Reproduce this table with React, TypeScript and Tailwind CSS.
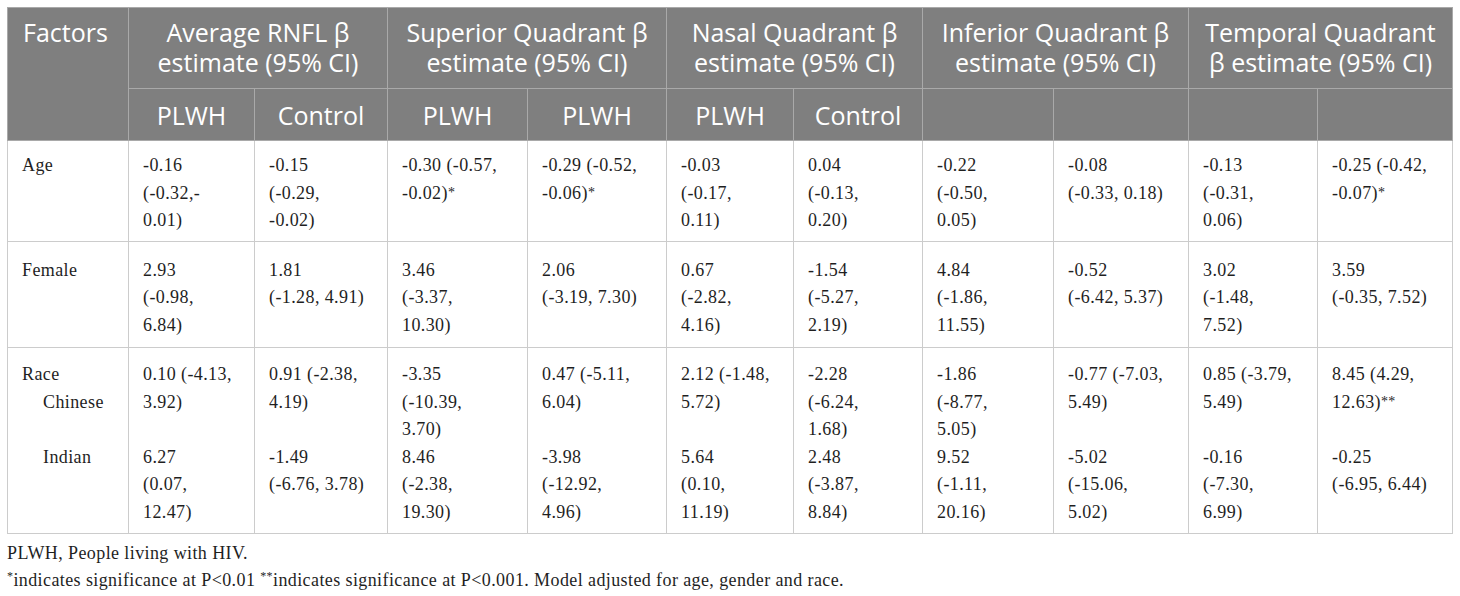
import React from "react";

const widths = [
  "w-[121px]",
  "w-[126px]",
  "w-[133px]",
  "w-[140px]",
  "w-[139px]",
  "w-[127px]",
  "w-[129px]",
  "w-[131px]",
  "w-[135px]",
  "w-[129px]",
  "w-[135px]",
];

type Cell = string[];

const ageRow: Cell[] = [
  ["-0.16", "(-0.32,-", "0.01)"],
  ["-0.15", "(-0.29,", "-0.02)"],
  ["-0.30 (-0.57,", "-0.02)*"],
  ["-0.29 (-0.52,", "-0.06)*"],
  ["-0.03", "(-0.17,", "0.11)"],
  ["0.04", "(-0.13,", "0.20)"],
  ["-0.22", "(-0.50,", "0.05)"],
  ["-0.08", "(-0.33, 0.18)"],
  ["-0.13", "(-0.31,", "0.06)"],
  ["-0.25 (-0.42,", "-0.07)*"],
];

const femaleRow: Cell[] = [
  ["2.93", "(-0.98,", "6.84)"],
  ["1.81", "(-1.28, 4.91)"],
  ["3.46", "(-3.37,", "10.30)"],
  ["2.06", "(-3.19, 7.30)"],
  ["0.67", "(-2.82,", "4.16)"],
  ["-1.54", "(-5.27,", "2.19)"],
  ["4.84", "(-1.86,", "11.55)"],
  ["-0.52", "(-6.42, 5.37)"],
  ["3.02", "(-1.48,", "7.52)"],
  ["3.59", "(-0.35, 7.52)"],
];

const chineseRow: Cell[] = [
  ["0.10 (-4.13,", "3.92)"],
  ["0.91 (-2.38,", "4.19)"],
  ["-3.35", "(-10.39,", "3.70)"],
  ["0.47 (-5.11,", "6.04)"],
  ["2.12 (-1.48,", "5.72)"],
  ["-2.28", "(-6.24,", "1.68)"],
  ["-1.86", "(-8.77,", "5.05)"],
  ["-0.77 (-7.03,", "5.49)"],
  ["0.85 (-3.79,", "5.49)"],
  ["8.45 (4.29,", "12.63)**"],
];

const indianRow: Cell[] = [
  ["6.27", "(0.07,", "12.47)"],
  ["-1.49", "(-6.76, 3.78)"],
  ["8.46", "(-2.38,", "19.30)"],
  ["-3.98", "(-12.92,", "4.96)"],
  ["5.64", "(0.10,", "11.19)"],
  ["2.48", "(-3.87,", "8.84)"],
  ["9.52", "(-1.11,", "20.16)"],
  ["-5.02", "(-15.06,", "5.02)"],
  ["-0.16", "(-7.30,", "6.99)"],
  ["-0.25", "(-6.95, 6.44)"],
];

function Line({ text }: { text: string }) {
  const m = text.match(/^(.*?)(\*+)$/);
  if (m) {
    return (
      <div className="whitespace-nowrap">
        {m[1]}
        <sup className="text-[14px] relative top-[-2px]">{m[2]}</sup>
      </div>
    );
  }
  return <div className="whitespace-nowrap">{text}</div>;
}

function Lines({ lines }: { lines: string[] }) {
  return (
    <>
      {lines.map((l, i) => (
        <Line key={i} text={l} />
      ))}
    </>
  );
}

const headCell =
  "border border-[#a9a9a9] bg-[#7f7f7f] text-white text-center font-normal align-top";
const bodyCell = "border border-[#cccccc] align-top pl-[14px] pr-[8px]";

const groups: { l1: string; l2: string; subs: string[] }[] = [
  { l1: "Average RNFL β", l2: "estimate (95% CI)", subs: ["PLWH", "Control"] },
  { l1: "Superior Quadrant β", l2: "estimate (95% CI)", subs: ["PLWH", "PLWH"] },
  { l1: "Nasal Quadrant β", l2: "estimate (95% CI)", subs: ["PLWH", "Control"] },
  { l1: "Inferior Quadrant β", l2: "estimate (95% CI)", subs: ["", ""] },
  { l1: "Temporal Quadrant", l2: "β estimate (95% CI)", subs: ["", ""] },
];

export default function App() {
  return (
    <div className="w-[1460px] h-[596px] bg-white overflow-hidden">
      <div className="pt-[7px] pl-[7px]">
        <table className="table-fixed border-collapse w-[1445px] text-[#1f1f1f]">
          <colgroup>
            {widths.map((w, i) => (
              <col key={i} className={w} />
            ))}
          </colgroup>
          <thead className="font-['Open_Sans',sans-serif] text-[25px] leading-[30px]">
            <tr className="h-[81px]">
              <th
                rowSpan={2}
                className={`${headCell} text-left pl-[15px] pt-[9px]`}
              >
                Factors
              </th>
              {groups.map((g, i) => (
                <th
                  key={i}
                  colSpan={2}
                  className={`${headCell} pt-[9px] pb-[10px]`}
                >
                  <div className="whitespace-nowrap">{g.l1}</div>
                  <div className="whitespace-nowrap">{g.l2}</div>
                </th>
              ))}
            </tr>
            <tr className="h-[52px]">
              {groups.flatMap((g, i) =>
                g.subs.map((s, j) => (
                  <th
                    key={`${i}-${j}`}
                    className={`${headCell} !align-middle`}
                  >
                    {s}
                  </th>
                ))
              )}
            </tr>
          </thead>
          <tbody className="font-['Liberation_Serif',serif] text-[18px] leading-[27.5px] tracking-[0.4px]">
            <tr>
              <td className={`${bodyCell} pt-[11px] pb-[6px]`}>Age</td>
              {ageRow.map((c, i) => (
                <td key={i} className={`${bodyCell} pt-[11px] pb-[6px]`}>
                  <Lines lines={c} />
                </td>
              ))}
            </tr>
            <tr>
              <td className={`${bodyCell} pt-[15px] pb-[8px]`}>Female</td>
              {femaleRow.map((c, i) => (
                <td key={i} className={`${bodyCell} pt-[15px] pb-[8px]`}>
                  <Lines lines={c} />
                </td>
              ))}
            </tr>
            <tr>
              <td className={`${bodyCell} pt-[13px] pb-[7px]`}>
                <div>Race</div>
                <div className="pl-[21px] h-[55px]">Chinese</div>
                <div className="pl-[21px]">Indian</div>
              </td>
              {chineseRow.map((c, i) => (
                <td key={i} className={`${bodyCell} pt-[13px] pb-[7px]`}>
                  <div className="h-[82.5px]">
                    <Lines lines={c} />
                  </div>
                  <Lines lines={indianRow[i]} />
                </td>
              ))}
            </tr>
          </tbody>
        </table>
        <div className="mt-[6px] font-['Liberation_Serif',serif] text-[18px] leading-[27px] tracking-[0.4px] text-[#1f1f1f]">
          <div>PLWH, People living with HIV.</div>
          <div>
            <sup className="text-[12px]">*</sup>indicates significance at P&lt;0.01{" "}
            <sup className="text-[12px]">**</sup>indicates significance at P&lt;0.001. Model
            adjusted for age, gender and race.
          </div>
        </div>
      </div>
    </div>
  );
}
